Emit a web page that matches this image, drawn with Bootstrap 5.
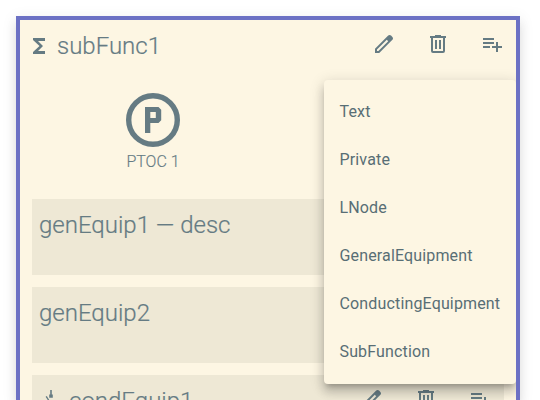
<!DOCTYPE html>
<html lang="en">
<head>
<meta charset="utf-8">
<meta name="viewport" content="width=device-width, initial-scale=1">
<title>subFunc1</title>
<link href="https://cdn.jsdelivr.net/npm/bootstrap@5.3.0/dist/css/bootstrap.min.css" rel="stylesheet">
<style>
html, body { height: 100%; }
body { background: #fff; color: #657b83; font-family: Roboto, sans-serif; }
.func-pane { height: 384px; margin: 16px 20px 0 16px; background: #fdf6e3; border: 4px solid #6c71c4; border-bottom: 0; box-shadow: 0 8px 10px 1px rgba(0,0,0,.07), 0 3px 14px 2px rgba(0,0,0,.06), 0 5px 5px -3px rgba(0,0,0,.1); }
.head-row { height: 48px; }
.head-title { font-size: 24px; font-weight: 300; line-height: 52px; margin: 0; -webkit-text-stroke: .2px currentColor; }
.head-row svg, .equip svg { fill: currentColor; display: block; }
.tools { gap: 30px; padding-top: 12px; }
.sigma { margin: 14px 6px 0 7px; }
.lnode { width: 96px; margin: 25px 0 0 85px; }
.lnode-label { font-size: 16px; font-weight: 300; line-height: 20px; margin-top: 5px; -webkit-text-stroke: .15px currentColor; }
.equip-list { gap: 12px; margin: 27px 12px 0; }
.equip { height: 76px; background: #eee8d5; padding-left: 7px; }
.cond-icon { margin: 12px 6px 0 0; }
.add-menu { top: 59.5px; right: 0; width: 192.5px; height: 304px; min-width: 0; padding: 8px 0; background: #fdf6e3; border: 0; border-radius: 4px; box-shadow: 0 5px 5px -3px rgba(0,0,0,.2), 0 8px 10px 1px rgba(0,0,0,.14), 0 3px 14px 2px rgba(0,0,0,.12); }
.add-menu .dropdown-item { height: 48px; line-height: 48px; padding: 0 16px; font-size: 16px; letter-spacing: .15px; color: #586e75; }
</style>
</head>
<body class="overflow-hidden">
<svg class="d-none">
  <symbol id="i-edit" viewBox="0 0 24 24"><path fill-rule="evenodd" d="M3 21v-4.250L16.200 3.580Q16.800 3 17.600 3T19.050 3.600L20.400 5Q21 5.600 21 6.400T20.400 7.800L7.250 21zM5 19h1.400l9.800-9.780L14.780 7.800 5 17.600z"/></symbol>
  <symbol id="i-delete" viewBox="0 0 24 24"><path d="M9,3V4H4V6H5V19A2,2 0 0,0 7,21H17A2,2 0 0,0 19,19V6H20V4H15V3H9M7,6H17V19H7V6M9,8V17H11V8H9M13,8V17H15V8H13Z"/></symbol>
  <symbol id="i-add" viewBox="0 0 24 24"><path d="M14 10H3v2h11v-2zm0-4H3v2h11V6zm4 8v-4h-2v4h-4v2h4v4h2v-4h4v-2h-4zM3 16h7v-2H3v2z"/></symbol>
</svg>
<main class="func-pane position-relative overflow-hidden">
  <header class="head-row d-flex align-items-start">
    <svg class="sigma" width="24" height="24" viewBox="0 0 24 24"><path d="M18 4H6v2l6.500 6L6 18v2h12v-3h-7l5-5-5-5h7z"/></svg>
    <h1 class="head-title">subFunc1</h1>
    <div class="tools d-flex ms-auto me-2 pe-1">
      <svg width="24" height="24"><use href="#i-edit"/></svg>
      <svg width="24" height="24"><use href="#i-delete"/></svg>
      <svg width="24" height="24"><use href="#i-add"/></svg>
    </div>
  </header>
  <div class="lnode d-flex flex-column align-items-center">
    <svg width="54" height="54" viewBox="0 0 54 54"><circle cx="27" cy="27" r="24.300" fill="none" stroke="#657b83" stroke-width="5.400"/><path fill="#657b83" fill-rule="evenodd" d="M19 14h13.500l2.700 2.700v10.600L32.500 30h-8.200v10H19zM24.300 19v6h5.500v-6z"/></svg>
    <div class="lnode-label">PTOC 1</div>
  </div>
  <div class="equip-list d-flex flex-column">
    <section class="equip"><h2 class="head-title">genEquip1 — desc</h2></section>
    <section class="equip"><h2 class="head-title">genEquip2</h2></section>
    <section class="equip d-flex align-items-start">
      <svg class="cond-icon" width="24" height="24" viewBox="0 0 24 24"><path d="M11.200 3h1.600v4.500h1v3.300h-3.600V7.500h1zM6.600 9.800l1.200-.8 4.600 7.500v4.500h-1v-4z"/></svg>
      <h2 class="head-title">condEquip1</h2>
      <div class="tools d-flex ms-auto me-2 pe-1">
        <svg width="24" height="24"><use href="#i-edit"/></svg>
        <svg width="24" height="24"><use href="#i-delete"/></svg>
        <svg width="24" height="24"><use href="#i-add"/></svg>
      </div>
    </section>
  </div>
  <div class="add-menu dropdown-menu show">
    <a class="dropdown-item">Text</a>
    <a class="dropdown-item">Private</a>
    <a class="dropdown-item">LNode</a>
    <a class="dropdown-item">GeneralEquipment</a>
    <a class="dropdown-item">ConductingEquipment</a>
    <a class="dropdown-item">SubFunction</a>
  </div>
</main>
<script src="https://cdn.jsdelivr.net/npm/bootstrap@5.3.0/dist/js/bootstrap.bundle.min.js"></script>
</body>
</html>
